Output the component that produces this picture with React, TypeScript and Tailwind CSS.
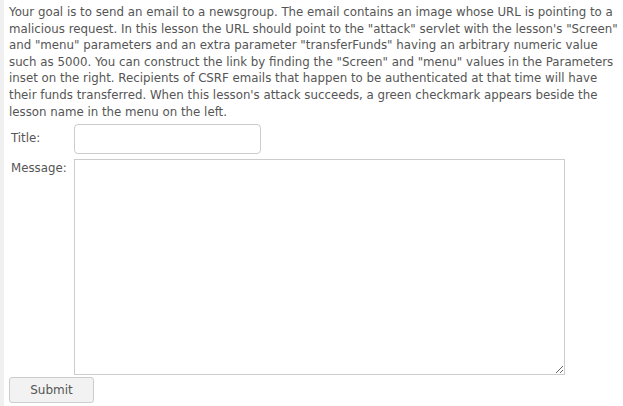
export default function App() {
  return (
    <div className="flex min-h-[406px] bg-white font-['DejaVu_Sans',sans-serif] text-[11.8px] text-[#555]">
      <div className="w-[4px] shrink-0 bg-[#f0f0f0]" />
      <div className="flex-1 pl-[5px] pt-[4px]">
        <p className="leading-[16.6px] whitespace-nowrap">
          Your goal is to send an email to a newsgroup. The email contains an image whose URL is pointing to a<br />
          malicious request. In this lesson the URL should point to the "attack" servlet with the lesson's "Screen"<br />
          and "menu" parameters and an extra parameter "transferFunds" having an arbitrary numeric value<br />
          such as 5000. You can construct the link by finding the "Screen" and "menu" values in the Parameters<br />
          inset on the right. Recipients of CSRF emails that happen to be authenticated at that time will have<br />
          their funds transferred. When this lesson's attack succeeds, a green checkmark appears beside the<br />
          lesson name in the menu on the left.
        </p>
        <div className="mt-[4px] flex items-center">
          <label className="w-[65px] pl-[2px]">Title:</label>
          <input className="h-[30px] w-[187px] rounded-[4px] border border-[#ccc] bg-white" />
        </div>
        <div className="mt-[5px] flex items-start">
          <label className="w-[65px] pl-[2px] pt-[1px]">Message:</label>
          <textarea className="h-[216px] w-[491px] border border-[#ccc] bg-white" />
        </div>
        <button className="mt-[2px] h-[26px] w-[85px] rounded-[3px] border border-[#ccc] bg-[#f2f2f2] text-[12px] text-[#555]">
          Submit
        </button>
      </div>
    </div>
  )
}
